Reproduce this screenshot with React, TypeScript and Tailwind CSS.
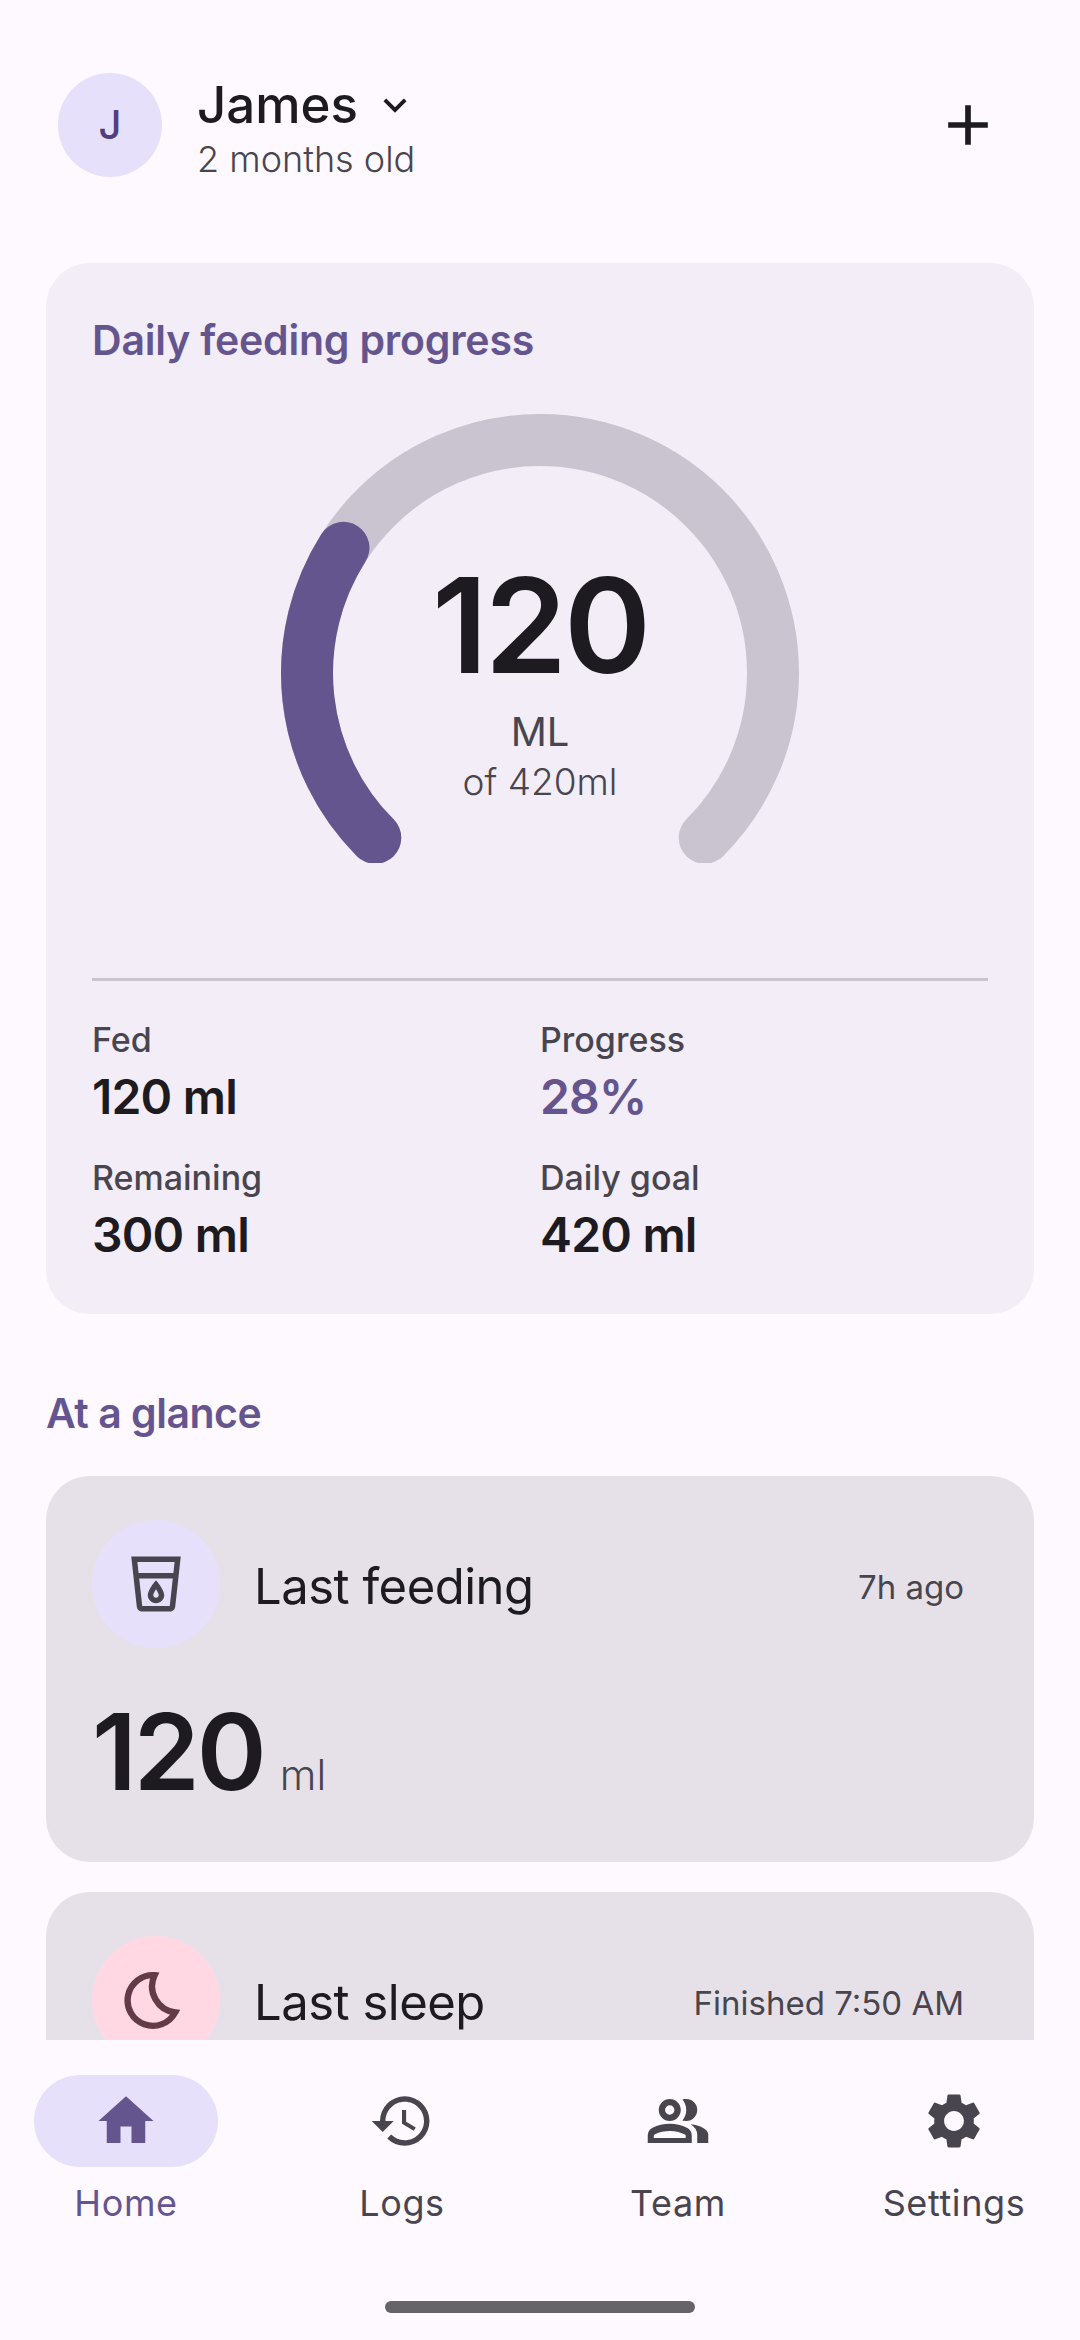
import type { ReactNode } from "react";
import {
  MdAdd,
  MdExpandMore,
  MdHistory,
  MdHome,
  MdOutlineLocalDrink,
  MdSettings,
} from "react-icons/md";

const fontStack = { fontFamily: "Inter, 'Noto Sans', sans-serif" };

// gauge sweeps 270deg, starting bottom-left
function polar(deg: number, r: number) {
  const a = (deg * Math.PI) / 180;
  return { x: 260 + r * Math.cos(a), y: 260 + r * Math.sin(a) };
}

function arc(from: number, to: number, r: number) {
  const s = polar(from, r);
  const e = polar(to, r);
  const large = to - from > 180 ? 1 : 0;
  return `M ${s.x} ${s.y} A ${r} ${r} 0 ${large} 1 ${e.x} ${e.y}`;
}

function MoonIcon() {
  return (
    <svg width="66" height="66" viewBox="0 0 24 24" fill="none" className="text-[#633b48]">
      <path
        d="M11.5 3 A9.2 9.2 0 1 0 19 16.5 A9.5 9.5 0 0 1 11.5 3 Z"
        stroke="currentColor"
        strokeWidth="2.3"
        strokeLinejoin="miter"
      />
    </svg>
  );
}

function TeamIcon() {
  return (
    <svg width="66" height="66" viewBox="0 0 24 24" fill="currentColor">
      <path
        fillRule="evenodd"
        d="M1 20v-2.8q0-.85.44-1.56t1.16-1.09q1.55-.78 3.15-1.16T9 13t3.25.39t3.15 1.16q.72.38 1.16 1.09T17 17.2V20H1Zm2.2-1.8h11.6v-.9q0-.2-.3-.4q-1.3-.65-2.7-1T9 15.6t-2.8.3t-2.7 1q-.3.2-.3.4v.9Z"
      />
      <path d="M19 20v-3q0-1.1-.61-2.11t-1.74-1.74q1.28.15 2.4.51t2.1.89q.9.5 1.38 1.11T23 17v3h-4Z" />
      <path
        fillRule="evenodd"
        d="M9 12a4 4 0 1 1 0-8a4 4 0 0 1 0 8Zm0-2.3a1.7 1.7 0 1 0 0-3.4a1.7 1.7 0 0 0 0 3.4Z"
      />
      <path d="M19 8q0 1.65-1.18 2.83T15 12q-.28 0-.7-.06t-.7-.14q.68-.8 1.04-1.78T15 8t-.36-2.03T13.6 4.2q.35-.13.7-.16T15 4q1.65 0 2.83 1.18T19 8Z" />
    </svg>
  );
}

function Gauge() {
  return (
    <div className="relative w-[520px] h-[450px] mx-auto">
      <svg width="520" height="450" viewBox="0 0 520 450" fill="none">
        <path d={arc(135, 405, 233)} stroke="#cac4d0" strokeWidth="52" strokeLinecap="round" />
        <path d={arc(135, 212.5, 233)} stroke="#65558f" strokeWidth="52" strokeLinecap="round" />
      </svg>
      <div className="absolute inset-x-0 top-[137px] flex flex-col items-center">
        <span className="text-[132px] leading-[150px] font-semibold text-[#1d1b20] tracking-[-3px]">120</span>
        <span className="text-[40px] leading-[48px] mt-[8px] text-[#49454f]">ML</span>
        <span className="text-[37px] leading-[44px] mt-[4px] font-light text-[#49454f]">of 420ml</span>
      </div>
    </div>
  );
}

function Stat({ label, value, accent }: { label: string; value: string; accent?: boolean }) {
  return (
    <div className="flex flex-col">
      <span className="text-[34px] leading-[42px] font-medium text-[#49454f]">{label}</span>
      <span
        className={`text-[48px] leading-[62px] mt-[5px] font-semibold tracking-[-0.8px] ${
          accent ? "text-[#65558f]" : "text-[#1d1b20]"
        }`}
      >
        {value}
      </span>
    </div>
  );
}

function GlanceCard({
  icon,
  iconBg,
  title,
  meta,
  children,
}: {
  icon: ReactNode;
  iconBg: string;
  title: string;
  meta: string;
  children?: ReactNode;
}) {
  return (
    <div className="bg-[#e6e1e8] rounded-[44px] px-[46px] pt-[44px] pb-[50px]">
      <div className="flex items-center">
        <div className={`w-[128px] h-[128px] rounded-full flex items-center justify-center shrink-0 ${iconBg}`}>
          {icon}
        </div>
        <span className="ml-[34px] mt-[6px] text-[49px] leading-[60px] text-[#1d1b20] tracking-[-0.5px]">{title}</span>
        <span className="ml-auto mr-[24px] mt-[6px] text-[33px] leading-[44px] text-[#49454f]">{meta}</span>
      </div>
      {children}
    </div>
  );
}

function NavItem({ icon, label, active }: { icon: ReactNode; label: string; active?: boolean }) {
  return (
    <div className="w-[184px] flex flex-col items-center">
      <div
        className={`w-[184px] h-[92px] rounded-[46px] flex items-center justify-center ${
          active ? "bg-[#e7e0fb] text-[#65558f]" : "text-[#49454f]"
        }`}
      >
        {icon}
      </div>
      <span
        className={`mt-[12px] text-[36px] leading-[48px] tracking-[0.6px] whitespace-nowrap ${
          active ? "text-[#65558f]" : "text-[#49454f]"
        }`}
      >
        {label}
      </span>
    </div>
  );
}

export default function App() {
  return (
    <div className="w-[1080px] h-[2340px] bg-[#fef8ff] flex flex-col overflow-hidden" style={fontStack}>
      <div className="flex-1 min-h-0 overflow-hidden">
        <header className="flex items-start pl-[58px] pr-[78px] pt-[71px]">
          <div className="mt-[2px] w-[104px] h-[104px] rounded-full bg-[#e7e0fb] flex items-center justify-center">
            <span className="text-[40px] font-medium text-[#4f4080]">J</span>
          </div>
          <div className="ml-[35px] mt-[3px] flex flex-col">
            <div className="flex items-center">
              <span className="text-[51px] leading-[62px] font-medium text-[#1d1b20]">James</span>
              <MdExpandMore size={46} className="ml-[14px] text-[#1d1b20]" />
            </div>
            <span className="text-[36px] leading-[46px] font-light text-[#49454f]">2 months old</span>
          </div>
          <MdAdd size={68} className="ml-auto mt-[20px] text-[#1d1b20]" />
        </header>

        <main className="px-[46px]">
          <section className="mt-[81px] bg-[#f2edf6] rounded-[44px] px-[46px] pt-[50px] pb-[48px]">
            <h2 className="text-[41px] leading-[54px] font-semibold text-[#65558f] tracking-[-0.2px]">
              Daily feeding progress
            </h2>
            <div className="mt-[46px]">
              <Gauge />
            </div>
            <div className="mt-[115px] h-[3px] bg-[#cac4d0]" />
            <div className="mt-[38px] grid grid-cols-2 gap-y-[29px]">
              <Stat label="Fed" value="120 ml" />
              <Stat label="Progress" value="28%" accent />
              <Stat label="Remaining" value="300 ml" />
              <Stat label="Daily goal" value="420 ml" />
            </div>
          </section>

          <h2 className="mt-[72px] text-[41px] leading-[54px] font-semibold text-[#65558f] tracking-[-0.5px]">
            At a glance
          </h2>

          <div className="mt-[36px] flex flex-col gap-[30px]">
            <GlanceCard
              icon={<MdOutlineLocalDrink size={66} className="text-[#49454f]" />}
              iconBg="bg-[#e7e0fb]"
              title="Last feeding"
              meta="7h ago"
            >
              <div className="mt-[44px] flex items-baseline">
                <span className="text-[106px] leading-[120px] font-semibold text-[#1d1b20] tracking-[-3px]">120</span>
                <span className="ml-[16px] text-[42px] font-light text-[#49454f]">ml</span>
              </div>
            </GlanceCard>
            <GlanceCard
              icon={<MoonIcon />}
              iconBg="bg-[#ffd8e4]"
              title="Last sleep"
              meta="Finished 7:50 AM"
            />
          </div>
        </main>
      </div>

      <nav className="h-[300px] shrink-0 flex flex-col bg-[#fef8ff]">
        <div className="pt-[35px] px-[34px] flex justify-between">
          <NavItem icon={<MdHome size={66} />} label="Home" active />
          <NavItem icon={<MdHistory size={66} />} label="Logs" />
          <NavItem icon={<TeamIcon />} label="Team" />
          <NavItem icon={<MdSettings size={66} />} label="Settings" />
        </div>
        <div className="mt-auto mb-[27px] mx-auto w-[310px] h-[12px] rounded-full bg-[#666468]" />
      </nav>
    </div>
  );
}
